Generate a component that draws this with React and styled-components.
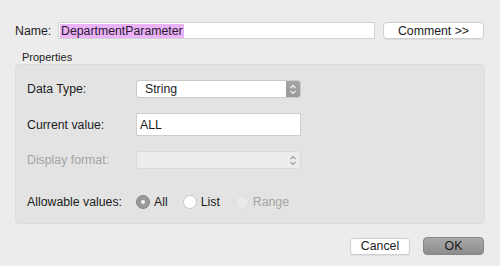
import React from "react";
import styled, { createGlobalStyle } from "styled-components";

const GlobalStyle = createGlobalStyle`
  html, body {
    margin: 0;
    padding: 0;
    background: #ececec;
  }
  body {
    font-family: "Liberation Sans", Arial, sans-serif;
    font-size: 12.3px;
    color: #1c1c1c;
  }
`;

const Chevrons = ({ color }) => (
  <svg width="8" height="11" viewBox="0 0 8 11">
    <path
      d="M1.5 4 L4 1.5 L6.5 4 M1.5 7 L4 9.5 L6.5 7"
      fill="none"
      stroke={color}
      strokeWidth="1.1"
    />
  </svg>
);

const App = () => {
  return (
    <Dialog>
      <GlobalStyle />
      <NameRow>
        <Label>Name:</Label>
        <NameField>
          <Selected>DepartmentParameter</Selected>
        </NameField>
        <Button $w={101}>Comment &gt;&gt;</Button>
      </NameRow>

      <GroupTitle>Properties</GroupTitle>
      <Panel>
        <Row $top={15}>
          <Label>Data Type:</Label>
          <Select>
            <SelectText>String</SelectText>
            <Stepper>
              <Chevrons color="#f4f4f4" />
            </Stepper>
          </Select>
        </Row>
        <Row $top={15}>
          <Label>Current value:</Label>
          <TextField>ALL</TextField>
        </Row>
        <Row $top={15}>
          <Label $disabled>Display format:</Label>
          <Select $disabled>
            <SelectText />
            <Stepper $disabled>
              <Chevrons color="#9a9a9a" />
            </Stepper>
          </Select>
        </Row>
        <Row $top={26}>
          <Label>Allowable values:</Label>
          <Radios>
            <RadioItem>
              <Radio $state="checked" />
              <RadioLabel>All</RadioLabel>
            </RadioItem>
            <RadioItem>
              <Radio />
              <RadioLabel>List</RadioLabel>
            </RadioItem>
            <RadioItem>
              <Radio $state="disabled" />
              <RadioLabel $disabled>Range</RadioLabel>
            </RadioItem>
          </Radios>
        </Row>
      </Panel>

      <Footer>
        <Button $w={60}>Cancel</Button>
        <DefaultButton>OK</DefaultButton>
      </Footer>
    </Dialog>
  );
};

export default App;

const Dialog = styled.div`
  width: 500px;
  height: 266px;
  box-sizing: border-box;
  padding: 22px 15px 0 15px;
  background: #ececec;
  display: flex;
  flex-direction: column;
`;

const NameRow = styled.div`
  display: flex;
  align-items: center;
  height: 17px;
  gap: 8px;
  margin-right: 1px;

  > span:first-child {
    width: 35px;
  }
`;

const Label = styled.span`
  width: 109px;
  flex: none;
  color: ${(p) => (p.$disabled ? "#a3a3a3" : "#1c1c1c")};
  white-space: nowrap;
`;

const NameField = styled.div`
  flex: 1;
  height: 17px;
  box-sizing: border-box;
  background: #fff;
  border: 1px solid #d3d3d3;
  display: flex;
  align-items: center;
  padding-left: 1px;
`;

const Selected = styled.span`
  background: #eab3f8;
  color: #2a1630;
  line-height: 14px;
  padding: 0 1px;
`;

const Button = styled.div`
  width: ${(p) => p.$w}px;
  height: 17px;
  box-sizing: border-box;
  flex: none;
  background: #fff;
  border: 1px solid #cfcfcf;
  border-radius: 4px;
  box-shadow: 0 1px 0 rgba(0, 0, 0, 0.06);
  display: flex;
  align-items: center;
  justify-content: center;
  color: #1c1c1c;
`;

const DefaultButton = styled.div`
  width: 61px;
  height: 18px;
  box-sizing: border-box;
  background: linear-gradient(#a9a9a9, #8d8d8d);
  border: 1px solid #858585;
  border-radius: 4px;
  display: flex;
  align-items: center;
  justify-content: center;
  color: #151515;
`;

const GroupTitle = styled.div`
  font-size: 11px;
  margin: 12px 0 0 7px;
  height: 13px;
  line-height: 13px;
  color: #1c1c1c;
`;

const Panel = styled.div`
  width: 470px;
  height: 160px;
  box-sizing: border-box;
  background: #e3e3e3;
  border: 1px solid #dcdcdc;
  border-radius: 4px;
  padding-left: 11px;
`;

const Row = styled.div`
  display: flex;
  align-items: center;
  margin-top: ${(p) => p.$top}px;
`;

const Select = styled.div`
  width: 165px;
  height: 18px;
  box-sizing: border-box;
  display: flex;
  background: ${(p) => (p.$disabled ? "#ececec" : "#fff")};
  border: 1px solid ${(p) => (p.$disabled ? "#d9d9d9" : "#cacaca")};
  border-radius: 3px;
  overflow: hidden;
`;

const SelectText = styled.span`
  flex: 1;
  padding-left: 8px;
  line-height: 16px;
`;

const Stepper = styled.div`
  width: 14px;
  display: flex;
  align-items: center;
  justify-content: center;
  background: ${(p) => (p.$disabled ? "transparent" : "linear-gradient(#a6a6a6, #999)")};
`;

const TextField = styled.div`
  width: 165px;
  height: 23px;
  box-sizing: border-box;
  background: #fff;
  border: 1px solid #cfcfcf;
  padding-left: 3px;
  display: flex;
  align-items: center;
`;

const Radios = styled.div`
  display: flex;
  align-items: center;
  gap: 15px;
`;

const RadioItem = styled.div`
  display: flex;
  align-items: center;
  gap: 4px;
`;

const Radio = styled.span`
  width: 14px;
  height: 14px;
  box-sizing: border-box;
  border-radius: 50%;
  position: relative;
  border: 1px solid
    ${(p) => (p.$state === "checked" ? "#868686" : p.$state === "disabled" ? "#dedede" : "#c9c9c9")};
  background: ${(p) =>
    p.$state === "checked" ? "#999" : p.$state === "disabled" ? "#e9e9e9" : "#fff"};

  &::after {
    content: "";
    display: ${(p) => (p.$state === "checked" ? "block" : "none")};
    position: absolute;
    left: 4px;
    top: 4px;
    width: 4px;
    height: 4px;
    border-radius: 50%;
    background: #f2f2f2;
  }
`;

const RadioLabel = styled.span`
  color: ${(p) => (p.$disabled ? "#a3a3a3" : "#1c1c1c")};
`;

const Footer = styled.div`
  display: flex;
  justify-content: flex-end;
  align-items: center;
  gap: 13px;
  margin-top: 13px;
  margin-right: 1px;
`;
